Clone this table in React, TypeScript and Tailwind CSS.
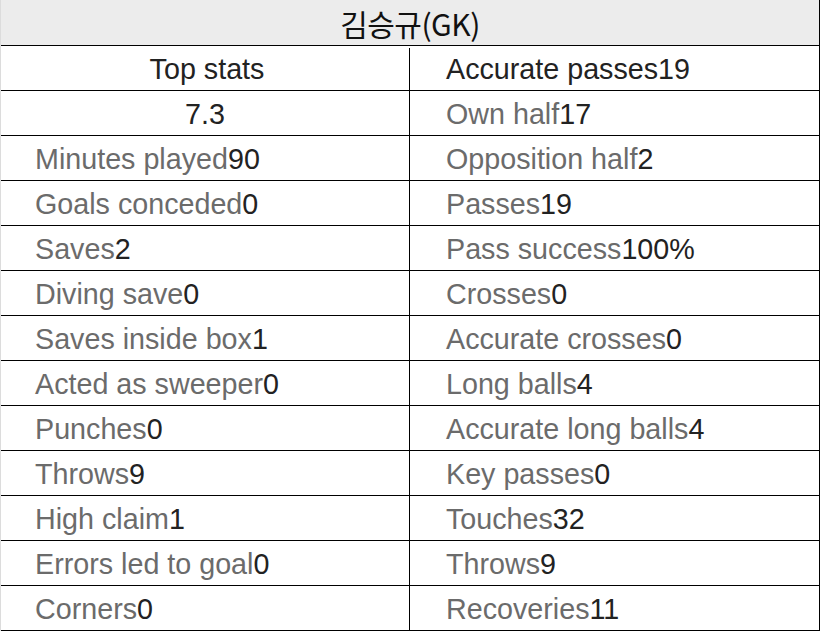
import React from "react";

const rows: [[string, string], [string, string]][] = [
  [["Minutes played", "90"], ["Opposition half", "2"]],
  [["Goals conceded", "0"], ["Passes", "19"]],
  [["Saves", "2"], ["Pass success", "100%"]],
  [["Diving save", "0"], ["Crosses", "0"]],
  [["Saves inside box", "1"], ["Accurate crosses", "0"]],
  [["Acted as sweeper", "0"], ["Long balls", "4"]],
  [["Punches", "0"], ["Accurate long balls", "4"]],
  [["Throws", "9"], ["Key passes", "0"]],
  [["High claim", "1"], ["Touches", "32"]],
  [["Errors led to goal", "0"], ["Throws", "9"]],
  [["Corners", "0"], ["Recoveries", "11"]],
];

function Stat({ label, value }: { label: string; value: string }) {
  return (
    <span>
      <span className="text-[#6b6b6b]">{label}</span>
      <span className="text-[#222222]">{value}</span>
    </span>
  );
}

export default function App() {
  return (
    <div
      className="bg-white w-[821px] h-[631px] text-[28.7px] leading-none"
      style={{ fontFamily: '"Liberation Sans", Arial, "Noto Sans CJK KR", sans-serif' }}
    >
      <div className="w-[820px] border-l border-l-[#dcdcdc] border-r border-r-black">
        <div className="h-[46px] bg-[#ececec] border-b border-black flex items-center justify-center text-[#111]">
          <span style={{ fontFamily: '"Noto Sans CJK KR", "Liberation Sans", sans-serif' }} className="text-[30px] tracking-[-0.5px]">
            김승규(GK)
          </span>
        </div>
        <div className="flex h-[45px] border-b border-black pt-[2px]">
          <div className="w-[409px] border-r border-black flex items-center justify-center pl-[4px] text-[#222222]">
            Top stats
          </div>
          <div className="flex-1 flex items-center pl-[36px] text-[#222222]">Accurate passes19</div>
        </div>
        <div className="flex h-[45px] border-b border-black">
          <div className="w-[409px] border-r border-black flex items-center justify-center pt-[2px] text-[#222222]">
            7.3
          </div>
          <div className="flex-1 flex items-center pl-[36px] pt-[2px]">
            <Stat label="Own half" value="17" />
          </div>
        </div>
        {rows.map(([l, r], i) => (
          <div key={i} className="flex h-[45px] border-b border-black">
            <div className="w-[409px] border-r border-black flex items-center pl-[34px] pt-[2px]">
              <Stat label={l[0]} value={l[1]} />
            </div>
            <div className="flex-1 flex items-center pl-[36px] pt-[2px]">
              <Stat label={r[0]} value={r[1]} />
            </div>
          </div>
        ))}
      </div>
    </div>
  );
}
